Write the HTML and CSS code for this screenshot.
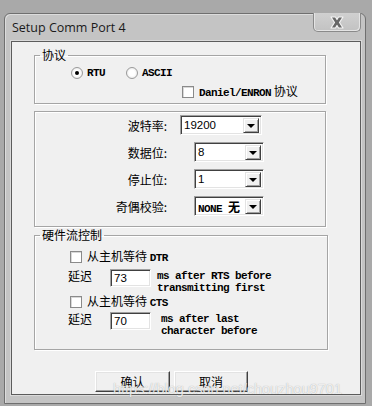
FILE: index.html
```html
<!DOCTYPE html>
<html lang="zh">
<head>
    <meta charset="UTF-8">
    <title>Setup Comm Port 4</title>
    <link rel="stylesheet" href="styles.css">
</head>
<body>
    <div class="window">
        <div class="titlebar">
            <span class="title">Setup Comm Port 4</span>
            <div class="close">
                <svg width="18" height="13" viewBox="0 0 18 13">
                    <path d="M3 1 L7.5 1 L9 3.5 L10.5 1 L15 1 L11.5 6.5 L15 12 L10.5 12 L9 9.5 L7.5 12 L3 12 L6.5 6.5 Z" fill="#686868" stroke="#f4f4f4" stroke-width="1.2" stroke-linejoin="round"/>
                </svg>
            </div>
        </div>

        <div class="client">
            <fieldset class="group group-proto">
                <legend>协议</legend>
                <div class="radio-row">
                    <label class="opt"><span class="radio checked"></span><span class="mono">RTU</span></label>
                    <label class="opt"><span class="radio"></span><span class="mono">ASCII</span></label>
                </div>
                <div class="check-row">
                    <span class="checkbox"></span>
                    <span class="text"><span class="mono">Daniel/ENRON</span> <span class="cn">协议</span></span>
                </div>
            </fieldset>

            <fieldset class="group group-serial">
                <div class="field">
                    <span class="cn">波特率:</span>
                    <div class="combo wide"><span class="value">19200</span><span class="drop"></span></div>
                </div>
                <div class="field">
                    <span class="cn">数据位:</span>
                    <div class="combo"><span class="value">8</span><span class="drop"></span></div>
                </div>
                <div class="field">
                    <span class="cn">停止位:</span>
                    <div class="combo"><span class="value">1</span><span class="drop"></span></div>
                </div>
                <div class="field">
                    <span class="cn">奇偶校验:</span>
                    <div class="combo"><span class="value mono">NONE <span class="cn">无</span></span><span class="drop"></span></div>
                </div>
            </fieldset>

            <fieldset class="group group-flow">
                <legend>硬件流控制</legend>
                <div class="flow-check">
                    <span class="checkbox"></span>
                    <span class="text"><span class="cn">从主机等待</span> <span class="mono">DTR</span></span>
                </div>
                <div class="delay-row">
                    <span class="cn delay-label">延迟</span>
                    <div class="edit">73</div>
                    <div class="mono note">ms after RTS before<br>transmitting first</div>
                </div>
                <div class="flow-check second">
                    <span class="checkbox"></span>
                    <span class="text"><span class="cn">从主机等待</span> <span class="mono">CTS</span></span>
                </div>
                <div class="delay-row">
                    <span class="cn delay-label">延迟</span>
                    <div class="edit">70</div>
                    <div class="mono note note-wide">ms after last<br>character before</div>
                </div>
            </fieldset>

            <div class="buttons">
                <div class="btn ok">确认</div>
                <div class="btn">取消</div>
            </div>

            <div class="watermark">https://blog.csdn.net/chouzhou9701</div>
        </div>
    </div>
</body>
</html>
```

FILE: styles.css
```css
body {
    margin: 0;
    background: #a9a9a9;
    height: 406px;
    overflow: hidden;
    font-family: "Noto Sans CJK SC", sans-serif;
    font-size: 12px;
    color: #000;
}
.window {
    margin: 13px 0 0 4px;
    width: 362px;
    box-sizing: border-box;
    border: 1px solid #6f6f6f;
    border-radius: 6px 6px 0 0;
    background: #c4c4c4;
    box-shadow: inset 1px 1px 0 #dcdcdc;
    padding: 0 4px 8px 6px;
}
.titlebar {
    display: flex;
    align-items: flex-start;
    height: 27px;
}
.title {
    font-family: "Open Sans", sans-serif;
    font-size: 12.5px;
    color: #1a1a1a;
    padding: 5px 0 0 1px;
}
.close {
    margin-left: auto;
    margin-top: -1px;
    width: 46px;
    height: 18px;
    border: 1px solid #8a8a8a;
    border-top: none;
    border-radius: 0 0 5px 5px;
    background: linear-gradient(#d0d0d0, #c2c2c2);
    box-shadow: inset 1px 0 0 #e4e4e4, inset -1px -1px 0 #e4e4e4;
    display: flex;
    align-items: center;
    justify-content: center;
}
.client {
    position: relative;
    width: 350px;
    height: 354px;
    box-sizing: border-box;
    border: 1px solid #5c5c5c;
    background: #f0f0f0;
    box-shadow: 0 0 0 1px #dadada;
    padding-top: 6px;
}
.cn {
    font-family: "Noto Sans CJK SC", sans-serif;
    font-size: 12px;
}
.mono {
    font-family: "Liberation Mono", monospace;
    font-size: 11px;
    font-weight: bold;
    letter-spacing: -0.6px;
}
.text {
    line-height: 14px;
    white-space: nowrap;
}
.group {
    margin: 0 0 0 22px;
    padding: 0;
    border: 1px solid #a5a5a5;
    box-shadow: 1px 1px 0 #fff, inset 1px 1px 0 #fff;
    min-width: 0;
}
.group legend {
    margin-left: 5px;
    padding: 0 2px;
    line-height: 14px;
}

/* 协议 */
.group-proto {
    width: 292px;
    height: 56px;
    box-sizing: border-box;
}
.radio-row {
    display: flex;
    gap: 21px;
    padding: 4px 0 0 36px;
    height: 14px;
}
.opt {
    display: flex;
    align-items: center;
    gap: 4px;
}
.radio {
    width: 12px;
    height: 12px;
    box-sizing: border-box;
    border-radius: 50%;
    border: 1px solid #9a9a9a;
    background: radial-gradient(circle, #fff 40%, #dedede);
    display: flex;
    align-items: center;
    justify-content: center;
}
.radio.checked::after {
    content: "";
    width: 4px;
    height: 4px;
    border-radius: 50%;
    background: #000;
}
.check-row {
    display: flex;
    align-items: center;
    padding: 5px 0 0 147px;
    height: 14px;
}
.checkbox {
    flex: none;
    width: 12px;
    height: 12px;
    box-sizing: border-box;
    border: 1px solid #8a8a8a;
    background: #fff;
    box-shadow: inset 1px 1px 0 #d8d8d8;
    margin-right: 5px;
}

/* 串口参数 */
.group-serial {
    margin-top: 7px;
    width: 292px;
    box-sizing: border-box;
    padding: 3px 0 10px 0;
    display: flex;
    flex-direction: column;
    gap: 7px;
}
.field {
    display: grid;
    grid-template-columns: 132px 70px;
    column-gap: 27px;
    align-items: center;
    height: 20px;
}
.field .cn {
    text-align: right;
}
.combo {
    display: flex;
    align-items: center;
    height: 20px;
    width: 70px;
    box-sizing: border-box;
    background: #fff;
    border-top: 1px solid #a0a0a0;
    border-left: 1px solid #a0a0a0;
    border-right: 1px solid #fff;
    border-bottom: 1px solid #fff;
    box-shadow: inset 1px 1px 0 #404040, inset -1px -1px 0 #e3e3e3;
    padding: 2px 2px 2px 3px;
}
.combo.wide {
    width: 82px;
    margin-left: -14px;
}
.value {
    flex: 1;
    font-family: "Liberation Sans", sans-serif;
    font-size: 11.5px;
}
.value.mono {
    font-family: "Liberation Mono", monospace;
    font-size: 11px;
}
.drop {
    width: 16px;
    height: 15px;
    box-sizing: border-box;
    background: #f0f0f0;
    border-top: 1px solid #e3e3e3;
    border-left: 1px solid #e3e3e3;
    border-right: 1px solid #404040;
    border-bottom: 1px solid #404040;
    box-shadow: inset 1px 1px 0 #fff, inset -1px -1px 0 #a0a0a0;
    display: flex;
    align-items: center;
    justify-content: center;
}
.drop::after {
    content: "";
    border-left: 4px solid transparent;
    border-right: 4px solid transparent;
    border-top: 4px solid #000;
    margin-top: 1px;
}

/* 硬件流控制 */
.group-flow {
    margin-top: 1px;
    width: 294px;
    box-sizing: border-box;
    padding: 8px 0 12px 0;
}
.flow-check {
    display: flex;
    align-items: center;
    height: 14px;
    padding-left: 35px;
}
.flow-check.second {
    margin-top: 1px;
}
.delay-row {
    display: flex;
    align-items: flex-start;
    padding: 5px 0 0 33px;
}
.delay-label {
    width: 24px;
    margin-right: 18px;
    line-height: 14px;
}
.edit {
    width: 41px;
    height: 18px;
    box-sizing: border-box;
    background: #fff;
    border-top: 1px solid #a0a0a0;
    border-left: 1px solid #a0a0a0;
    border-right: 1px solid #fff;
    border-bottom: 1px solid #fff;
    box-shadow: inset 1px 1px 0 #404040, inset -1px -1px 0 #e3e3e3;
    font-family: "Liberation Sans", sans-serif;
    font-size: 11.5px;
    padding: 2px 0 0 3px;
}
.note {
    margin-left: 6px;
    line-height: 12px;
    padding-top: 1px;
}
.note-wide {
    margin-left: 10px;
}
.group-flow .delay-row:last-child {
    padding-top: 3px;
}

/* 按钮 */
.buttons {
    display: flex;
    gap: 4px;
    padding: 21px 0 0 83px;
}
.btn {
    width: 74px;
    height: 21px;
    box-sizing: border-box;
    background: #f0f0f0;
    border-top: 1px solid #fff;
    border-left: 1px solid #fff;
    border-right: 1px solid #404040;
    border-bottom: 1px solid #404040;
    box-shadow: inset -1px -1px 0 #a0a0a0, inset 1px 1px 0 #e3e3e3;
    display: flex;
    align-items: center;
    justify-content: center;
}
.btn.ok {
    width: 75px;
}
.watermark {
    position: absolute;
    left: 101px;
    top: 339px;
    font-family: "Liberation Sans", sans-serif;
    font-size: 14.5px;
    color: rgba(255, 255, 255, 0.8);
    text-shadow: 0 0 1px rgba(110, 110, 110, 0.6);
    white-space: nowrap;
}
```
